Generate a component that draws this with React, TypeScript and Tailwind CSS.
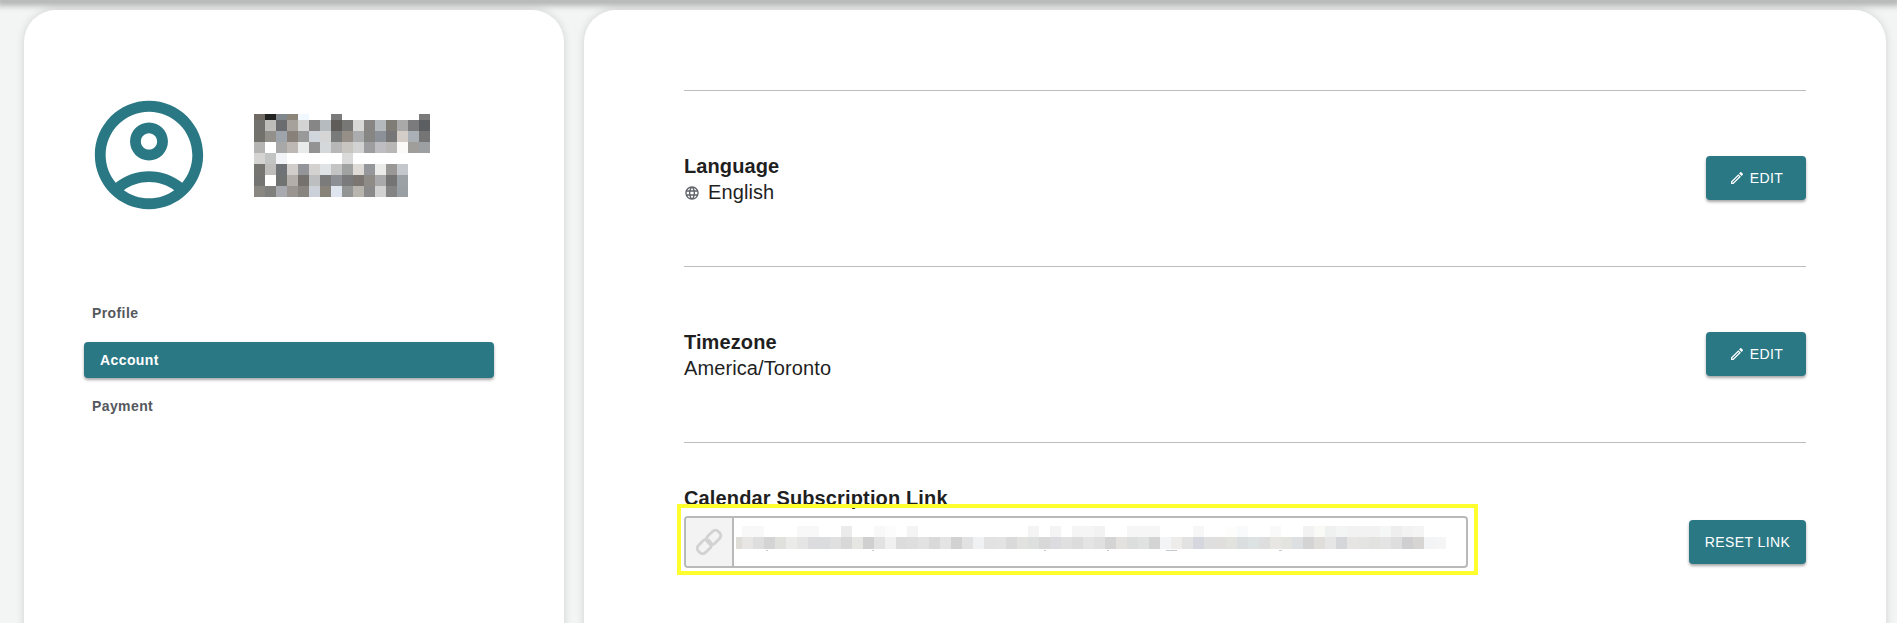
const font = { fontFamily: '"Liberation Sans", Arial, sans-serif' };

// pixelated name, rows of 11px cells ('' = nothing there)
const nameRows: { h: number; cells: string[] }[] = [
  { h: 6, cells: ['#6f6a64', '#222222', '#7f868c', '#8a8479', '#f2f8ff', '', '', '#7a7a7a', '', '', '', '', '', '', '', '#7b7b7b'] },
  { h: 11, cells: ['#73716d', '#bfbdba', '#6b6c70', '#a7a19c', '#d3d3d3', '#868686', '#b6bbc0', '#5f5c59', '#777775', '#d8d8d6', '#888684', '#b4b9be', '#7f7b75', '#a9a9a9', '#7b7b7d', '#5c5f62'] },
  { h: 11, cells: ['#73716c', '#93908b', '#9ea4ab', '#88817a', '#999999', '#d0d6dc', '#d5d5d5', '#797b7b', '#968f88', '#aaacae', '#868684', '#8b9197', '#767676', '#d3ccc7', '#a9b0b6', '#757575'] },
  { h: 11, cells: ['#b4b4b2', '#ffffff', '#a8a8a8', '#bdb8b4', '#e9ebea', '#939393', '#d4d8db', '#b7b7b7', '#c8c4bf', '#d2d2d2', '#9d9d9f', '#bdbdc2', '#b8b7b6', '#fbfaf8', '#a09e9b', '#9da0a3'] },
  { h: 11, cells: ['#d5d4d3', '#c2c4c3', '#f1f3f6', '', '', '', '', '', '#dadada'] },
  { h: 11, cells: ['#767570', '#bfbdbb', '#6f7276', '#d1cdca', '#939598', '#d3d2d0', '#e0e3e6', '#c4c4c4', '#a0a2a2', '#dedbd6', '#96979b', '#ebebe9', '#9a9896', '#c4c7cc'] },
  { h: 11, cells: ['#747473', '#ffffff', '#717373', '#b3aeaa', '#75716d', '#bcbec0', '#7b7b7b', '#8c9095', '#7a7a7c', '#7b7672', '#8f8b87', '#a9a9ab', '#747474', '#9ca1a5'] },
  { h: 11, cells: ['#8a8782', '#7f7f7d', '#a8aab0', '#9a9590', '#888480', '#ccd0d8', '#888379', '#dfe5ee', '#929594', '#b8b5af', '#8a8a8a', '#d2d2d2', '#848484', '#9a9fa3'] },
];

// blurred link, top row is sparse so it is index -> colour
const linkTop: Record<number, string> = {
  0: '#f8f8f8', 1: '#f8f8f8', 5: '#f8f8f8', 6: '#f8f8f8', 9: '#ebebeb', 12: '#f8f8f8', 13: '#fcfcfc', 15: '#f4f4f4',
  26: '#f4f4f4', 28: '#f4f4f4', 30: '#f5f5f5', 31: '#f5f5f5', 32: '#f2f2f2', 35: '#f6f6f6', 36: '#f6f6f6', 37: '#f6f6f6',
  41: '#f7f7f7', 44: '#fdfdfb', 45: '#f8fafc', 48: '#f9f9f9', 51: '#f2f2f2', 52: '#f9f9f5', 53: '#eff0f0', 54: '#f3f5f5',
  55: '#f2f2f2', 56: '#f2f2f2', 57: '#f2f2f2', 58: '#f5f7f6', 59: '#eeeeee', 60: '#f2f2f2', 61: '#f4f4f4',
};
const linkBottom = [
  '#e8e6e4', '#dedede', '#d4d4d4', '#e0e0dc', '#ebebe9', '#e5e5e5', '#dcdcdf', '#dadcde', '#e0e0e0', '#d8d8d8', '#e6e6e2',
  '#d0d0d0', '#e2e2e2', '#f0f0f0', '#dcdcdc', '#dedede', '#e2e2e2', '#d9d9d9', '#e4e4e4', '#d2d2d2', '#e2e2e2', '#f0f1f3',
  '#e2e2e2', '#e3e3e3', '#dadada', '#e2e2e0', '#dee0e0', '#d8d8d8', '#dcdce0', '#e0e0e0', '#dcdcdc', '#e4e4e4', '#e0e0e0',
  '#d4d4d4', '#e4e2df', '#dbdedd', '#dfe2e0', '#d4d4d4', '#f3f4f6', '#edecea', '#e2e2e2', '#d6d7de', '#dfdfe0', '#e0dfdd',
  '#e2e2df', '#dbdedf', '#dde3e3', '#dedede', '#e7e6e3', '#e3e3df', '#dde0e2', '#d4d4d4', '#dfdedb', '#e6e6e6', '#d5d6da',
  '#e6e5e3', '#e4e4e2', '#e2e2e0', '#e4e4e4', '#dedede', '#cfcfd1', '#d6d5d3', '#f3f4f6', '#f5f5f6',
];
const linkTicks = [
  [30, 2], [136, 2], [308, 2], [371, 2], [430, 11], [543, 3],
];

function PixelName() {
  let y = 0;
  return (
    <svg width="176" height="83" shapeRendering="crispEdges" className="mt-6">
      {nameRows.map((row, r) => {
        const top = y;
        y += row.h;
        return row.cells.map((c, i) => c && <rect key={`${r}-${i}`} x={i * 11} y={top} width="11" height={row.h} fill={c} />);
      })}
    </svg>
  );
}

function BlurredLink() {
  return (
    <svg width="712" height="26" shapeRendering="crispEdges">
      <rect x="0" y="11" width="6" height="12" fill="#e0dcd8" />
      {Object.entries(linkTop).map(([k, c]) => (
        <rect key={k} x={6 + Number(k) * 11} y="0" width="11" height="11" fill={c} />
      ))}
      {linkBottom.map((c, k) => (
        <rect key={k} x={6 + k * 11} y="11" width="11" height="12" fill={c} />
      ))}
      {linkTicks.map(([x, w]) => (
        <rect key={x} x={x} y="24" width={w} height="1" fill="#c4c8cc" />
      ))}
    </svg>
  );
}

function EditButton() {
  return (
    <button className="mb-px flex h-[44px] w-[100px] items-center justify-center gap-[5px] rounded bg-[#2b7885] text-sm tracking-[0.4px] text-white shadow-[0_2px_3px_rgba(0,0,0,0.35)]">
      <svg width="16" height="16" viewBox="0 0 24 24" fill="currentColor">
        <path d="M14.06 9.02l.92.92L5.92 19H5v-.92l9.06-9.06M17.66 3c-.25 0-.51.1-.7.29l-1.83 1.83 3.75 3.75 1.83-1.83c.39-.39.39-1.02 0-1.41l-2.34-2.34c-.2-.2-.45-.29-.71-.29zm-3.6 3.19L3 17.25V21h3.75L17.81 9.94l-3.75-3.75z" />
      </svg>
      EDIT
    </button>
  );
}

export default function App() {
  return (
    <div className="h-[623px] overflow-hidden bg-[#f3f5f4]" style={font}>
      <div className="h-0 w-full shadow-[0_1px_7px_4px_rgba(0,0,0,0.33)]" />
      <div className="flex gap-5 pl-6 pt-[10px]">
        {/* sidebar */}
        <div className="h-[700px] w-[540px] rounded-[32px] bg-white pl-[60px] pt-[80px] shadow-[0_0_8px_rgba(0,0,0,0.14)]">
          <div className="flex gap-10">
            <svg width="130" height="130" viewBox="0 0 24 24" fill="#2b7885">
              <path d="M12 2C6.48 2 2 6.48 2 12s4.48 10 10 10 10-4.48 10-10S17.52 2 12 2zM7.35 18.5C8.66 17.56 10.26 17 12 17s3.34.56 4.65 1.5c-1.31.94-2.91 1.5-4.65 1.5s-3.34-.56-4.65-1.5zm10.79-1.38C16.45 15.8 14.32 15 12 15s-4.45.8-6.14 2.12C4.7 15.73 4 13.95 4 12c0-4.42 3.58-8 8-8s8 3.58 8 8c0 1.95-.7 3.73-1.86 5.12z" />
              <path d="M12 6c-1.93 0-3.5 1.57-3.5 3.5S10.07 13 12 13s3.5-1.57 3.5-3.5S13.93 6 12 6zm0 5c-.83 0-1.5-.67-1.5-1.5S11.17 8 12 8s1.5.67 1.5 1.5S12.83 11 12 11z" />
            </svg>
            <PixelName />
          </div>
          <div className="mt-[75px] flex w-[410px] flex-col gap-[10.5px] text-sm font-bold tracking-[0.4px] text-[#55585c]">
            <div className="flex h-[36px] items-center pl-2">Profile</div>
            <div className="flex h-[36px] items-center rounded bg-[#2b7885] pl-4 text-white shadow-[0_2px_3px_rgba(0,0,0,0.35)]">Account</div>
            <div className="flex h-[36px] items-center pl-2">Payment</div>
          </div>
        </div>

        {/* account settings */}
        <div className="h-[700px] w-[1302px] rounded-[32px] bg-white pl-[100px] pr-[80px] pt-[80px] text-xl leading-[25px] tracking-[0.1px] text-[#1f1f1f] shadow-[0_0_8px_rgba(0,0,0,0.14)]">
          <div className="flex h-[176px] items-center justify-between border-t border-[#bdbdbd]">
            <div className="mt-[2px]">
              <div className="font-bold">Language</div>
              <div className="mt-px flex items-center gap-2">
                <svg width="16" height="16" viewBox="0 0 24 24" fill="#5f6368">
                  <path d="M11.99 2C6.47 2 2 6.48 2 12s4.47 10 9.99 10C17.52 22 22 17.52 22 12S17.52 2 11.99 2zm6.93 6h-2.95c-.32-1.25-.78-2.45-1.38-3.56 1.84.63 3.37 1.91 4.33 3.56zM12 4.04c.83 1.2 1.48 2.53 1.91 3.96h-3.82c.43-1.43 1.08-2.76 1.91-3.96zM4.26 14C4.1 13.36 4 12.69 4 12s.1-1.36.26-2h3.38c-.08.66-.14 1.32-.14 2 0 .68.06 1.34.14 2H4.26zm.82 2h2.95c.32 1.25.78 2.45 1.38 3.56-1.84-.63-3.37-1.9-4.33-3.56zm2.95-8H5.08c.96-1.66 2.49-2.93 4.33-3.56C8.81 5.55 8.35 6.75 8.03 8zM12 19.96c-.83-1.2-1.48-2.53-1.91-3.96h3.82c-.43 1.43-1.08 2.76-1.91 3.96zM14.34 14H9.66c-.09-.66-.16-1.32-.16-2 0-.68.07-1.35.16-2h4.68c.09.65.16 1.32.16 2 0 .68-.07 1.34-.16 2zm.25 5.56c.6-1.11 1.06-2.31 1.38-3.56h2.95c-.96 1.65-2.49 2.93-4.33 3.56zM16.36 14c.08-.66.14-1.32.14-2 0-.68-.06-1.34-.14-2h3.38c.16.64.26 1.31.26 2s-.1 1.36-.26 2h-3.38z" />
                </svg>
                English
              </div>
            </div>
            <EditButton />
          </div>

          <div className="flex h-[176px] items-center justify-between border-t border-[#bdbdbd]">
            <div className="mt-[2px]">
              <div className="font-bold">Timezone</div>
              <div className="mt-px">America/Toronto</div>
            </div>
            <EditButton />
          </div>

          <div className="flex items-end justify-between border-t border-[#bdbdbd] pt-[43px]">
            <div>
              <div className="font-bold tracking-[0.14px]">Calendar Subscription Link</div>
              <div className="relative mt-[5px] flex h-[52px] w-[784px] rounded border-2 border-[#b9b9b9]">
                <div className="flex w-[48px] items-center justify-center rounded-l-sm border-r-2 border-[#b9b9b9] bg-[#f3f3f3]">
                  <svg width="34" height="34" viewBox="0 0 34 34" fill="none" stroke="#d2d2d2" strokeWidth="2.8" className="-rotate-45">
                    <rect x="3" y="12" width="15" height="10" rx="4" />
                    <rect x="16" y="12" width="15" height="10" rx="4" />
                  </svg>
                </div>
                <div className="pl-[2px] pt-2">
                  <BlurredLink />
                </div>
                {/* yellow highlight drawn over the field */}
                <div className="pointer-events-none absolute -bottom-[9px] -left-[9px] -right-[12px] -top-[14px] border-4 border-[#ffff2d]" />
              </div>
            </div>
            <button className="mb-1 h-[44px] w-[117px] rounded bg-[#2b7885] text-sm tracking-[0.4px] text-white shadow-[0_2px_3px_rgba(0,0,0,0.35)]">
              RESET LINK
            </button>
          </div>
        </div>
      </div>
    </div>
  );
}
